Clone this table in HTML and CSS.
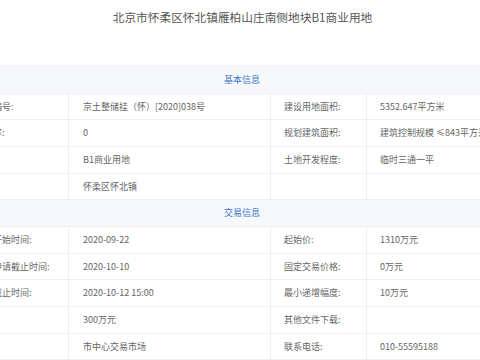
FILE: index.html
```html
<!DOCTYPE html>
<html lang="zh-CN">
<head>
<meta charset="utf-8">
<link rel="stylesheet" href="styles.css">
</head>
<body>
<div class="page">
  <h1 class="title">北京市怀柔区怀北镇雁柏山庄南侧地块B1商业用地</h1>
  <div class="table">
    <div class="band">基本信息</div>
    <div class="row">
      <div class="lab">宗地编号:</div><div class="val">京土整储挂（怀）[2020]038号</div>
      <div class="lab">建设用地面积:</div><div class="val">5352.647平方米</div>
    </div>
    <div class="row">
      <div class="lab">容积率:</div><div class="val">0</div>
      <div class="lab">规划建筑面积:</div><div class="val">建筑控制规模 ≤843平方米</div>
    </div>
    <div class="row">
      <div class="lab">用途:</div><div class="val">B1商业用地</div>
      <div class="lab">土地开发程度:</div><div class="val">临时三通一平</div>
    </div>
    <div class="row">
      <div class="lab">位置:</div><div class="val">怀柔区怀北镇</div>
      <div class="lab"></div><div class="val"></div>
    </div>
    <div class="band">交易信息</div>
    <div class="row">
      <div class="lab">挂牌开始时间:</div><div class="val">2020-09-22</div>
      <div class="lab">起始价:</div><div class="val">1310万元</div>
    </div>
    <div class="row">
      <div class="lab">交易申请截止时间:</div><div class="val">2020-10-10</div>
      <div class="lab">固定交易价格:</div><div class="val">0万元</div>
    </div>
    <div class="row">
      <div class="lab">挂牌截止时间:</div><div class="val">2020-10-12 15:00</div>
      <div class="lab">最小递增幅度:</div><div class="val">10万元</div>
    </div>
    <div class="row">
      <div class="lab">保证:</div><div class="val">300万元</div>
      <div class="lab">其他文件下载:</div><div class="val"></div>
    </div>
    <div class="row">
      <div class="lab">地点:</div><div class="val">市中心交易市场</div>
      <div class="lab">联系电话:</div><div class="val">010-55595188</div>
    </div>
  </div>
</div>
</body>
</html>
```
FILE: styles.css
```css
html, body {
  margin: 0;
  padding: 0;
  background: #fff;
}
body {
  font-family: "Noto Sans CJK SC", "Noto Sans", sans-serif;
  color: #666;
  overflow: hidden;
  width: 480px;
  height: 360px;
}
.page {
  width: 480px;
}
.title {
  margin: 0;
  padding-top: 10px;
  height: 56px;
  box-sizing: content-box;
  font-size: 11.7px;
  line-height: 14px;
  font-weight: normal;
  color: #555;
  text-align: center;
  padding-left: 5px;
}
.table {
  margin-left: -38px;
  width: 610px;
  border-top: 1px solid #eceff3;
}
.band {
  height: 26.67px;
  box-sizing: border-box;
  background: #f6f8fb;
  border-bottom: 1px solid #eceff3;
  color: #3d78c6;
  font-size: 9px;
  line-height: 25px;
  text-align: center;
  padding-right: 50px;
}
.row {
  display: grid;
  grid-template-columns: 107px 202px 96px 1fr;
  height: 26.67px;
  box-sizing: border-box;
  border-bottom: 1px solid #eceff3;
}
.lab, .val {
  font-size: 9px;
  line-height: 25px;
  white-space: nowrap;
  overflow: hidden;
  border-right: 1px solid #eceff3;
  padding-left: 13px;
}
.val {
  padding-left: 14px;
}
.row .val:last-child {
  padding-left: 13px;
  border-right: none;
}
```
